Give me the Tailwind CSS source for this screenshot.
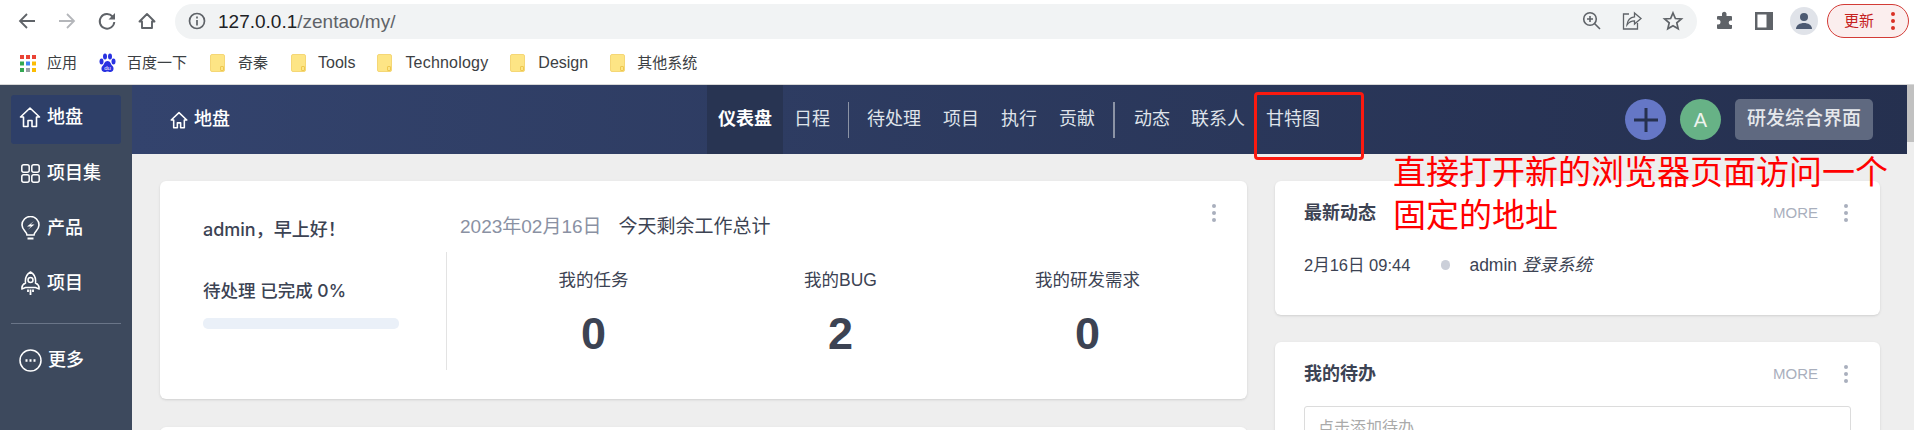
<!DOCTYPE html>
<html lang="zh-CN">
<head>
  <meta charset="UTF-8">
  <title>地盘 - 禅道</title>
  <script src="https://cdn.jsdelivr.net/npm/@tailwindcss/browser@4"></script>
</head>
<body class="relative h-[430px] w-[1914px] overflow-hidden bg-white font-['Liberation_Sans','Noto_Sans_CJK_SC',sans-serif] text-[#3c4353]">
  <!-- Browser toolbar -->
  <div class="flex h-[42px] items-center">
    <div class="flex w-[175px] shrink-0 items-center gap-[20px] pl-[17px] text-[#5f6368]">
      <svg class="h-5 w-5" viewBox="0 0 20 20" fill="none" stroke="currentColor" stroke-width="1.800"><path d="M18 10H3M10 3l-7 7 7 7"/></svg>
      <svg class="h-5 w-5 text-[#b4b6ba]" viewBox="0 0 20 20" fill="none" stroke="currentColor" stroke-width="1.800"><path d="M2 10h15M10 3l7 7-7 7"/></svg>
      <svg class="h-5 w-5" viewBox="0 0 20 20" fill="none" stroke="currentColor" stroke-width="1.900"><path d="M15.500 5.500A7.300 7.300 0 1 0 17.300 11"/><path d="M18 2v6.500h-6.500z" fill="currentColor" stroke="none"/></svg>
      <svg class="h-5 w-5" viewBox="0 0 20 20" fill="none" stroke="currentColor" stroke-width="1.900"><path d="M2.500 10.500 10 3l7.500 7.500h-2.500V17H5v-6.500z" stroke-linejoin="round"/></svg>
    </div>
    <div class="flex h-[35px] w-[1522px] shrink-0 items-center rounded-full bg-[#f1f3f4] pl-[13px] text-[#5f6368]">
      <svg class="h-[18px] w-[18px] shrink-0" viewBox="0 0 18 18" fill="none" stroke="currentColor" stroke-width="1.700"><circle cx="9" cy="9" r="7.500"/><path d="M9 8v5.500M9 4.500v2"/></svg>
      <span class="ml-[12px] text-[19px] leading-none"><span class="text-[#202124]">127.0.0.1</span>/zentao/my/</span>
      <div class="ml-auto flex items-center gap-[19px] pr-[13px]">
        <svg class="h-[20px] w-[20px]" viewBox="0 0 20 20" fill="none" stroke="currentColor" stroke-width="1.600"><circle cx="8" cy="8" r="6.300"/><path d="M12.500 12.500 18 18M8 5v6M5 8h6"/></svg>
        <svg class="h-[22px] w-[22px]" viewBox="0 0 22 22" fill="none" stroke="currentColor" stroke-width="1.300"><path d="M8 4H2.500v15h14v-6"/><path d="M13.500 3l6.500 5.500-6.500 5.500v-3.200c-3.500 0-5.500 1.200-7.500 4 .5-4.500 3-7.500 7.500-8z"/></svg>
        <svg class="h-[22px] w-[22px]" viewBox="0 0 22 22" fill="none" stroke="currentColor" stroke-width="1.700"><path d="m11 3 2.400 5.500 6 .5-4.600 3.900 1.400 5.900L11 15.800l-5.200 3 1.400-5.900L2.600 9l6-.5z"/></svg>
      </div>
    </div>
    <div class="flex flex-1 items-center pl-[18px] text-[#5f6368]">
      <svg class="h-5 w-5" viewBox="0 0 20 20" fill="currentColor"><path d="M7 2.500a2.300 2.300 0 0 1 4.500 0V5H16a1 1 0 0 1 1 1v3.500h-1.500a2.300 2.300 0 0 0 0 4.500H17v3a1 1 0 0 1-1 1H3a1 1 0 0 1-1-1v-3.500h1a2.500 2.500 0 0 0 0-5H2V6a1 1 0 0 1 1-1h4z"/></svg>
      <svg class="ml-[20px] h-[18px] w-[18px]" viewBox="0 0 18 18" fill="none" stroke="currentColor" stroke-width="2.500"><path d="M1.200 1.200h15.600v15.600H1.200z"/><path d="M14 1v16" stroke-width="5"/></svg>
      <div class="ml-[17px] flex h-7 w-7 items-center justify-center rounded-full bg-[#e0e3e9]">
        <svg class="h-[18px] w-[18px] text-[#4c5a72]" viewBox="0 0 18 18" fill="currentColor"><circle cx="9" cy="5" r="4"/><path d="M1 17c0-4 4-6 8-6s8 2 8 6z"/></svg>
      </div>
      <div class="ml-[9px] flex h-[34px] w-[82px] items-center rounded-full border border-[#d33b36] bg-[#fbeeee] pl-[16px] text-[15px] text-[#c5221f]">
        <span>更新</span>
        <span class="ml-[17px] flex flex-col gap-[3px]"><i class="h-1 w-1 rounded-full bg-[#d93025]"></i><i class="h-1 w-1 rounded-full bg-[#d93025]"></i><i class="h-1 w-1 rounded-full bg-[#d93025]"></i></span>
      </div>
    </div>
  </div>

  <!-- Bookmarks bar -->
  <div class="flex h-[43px] items-center border-b border-[#d8d8d8] text-[15px] text-[#3c4043]">
    <svg class="ml-[20px] h-[17px] w-[16px]" viewBox="0 0 16 17"><path fill="#ea4335" d="M0 0h4v4H0zM6 0h4v4H6zM12 0h4v4h-4z"/><path fill="#34a853" d="M0 6.500h4v4H0z"/><path fill="#4285f4" d="M6 6.500h4v4H6z"/><path fill="#fbbc04" d="M12 6.500h4v4h-4z"/><path fill="#34a853" d="M0 13h4v4H0z"/><path fill="#9aa0a6" d="M6 13h4v4H6z"/><path fill="#fbbc04" d="M12 13h4v4h-4z"/></svg>
    <span class="ml-[11px]">应用</span>
    <svg class="ml-[22px] h-[20px] w-[17px]" viewBox="0 0 17 20" fill="#2932e1"><ellipse cx="2.500" cy="8.500" rx="2" ry="3"/><ellipse cx="6" cy="3.500" rx="2" ry="3"/><ellipse cx="11" cy="3.500" rx="2" ry="3"/><ellipse cx="14.500" cy="8.500" rx="2" ry="3"/><path d="M8.500 8c3 0 3 3 5 5s1 6-2 6c-1.500 0-2-.5-3-.5s-1.500.5-3 .5c-3 0-4-4-2-6s2-5 5-5z"/><text x="8.500" y="17" font-size="6" text-anchor="middle" fill="#fff">du</text></svg>
    <span class="ml-[11px]">百度一下</span>
    <span class="relative ml-[23px] h-[18px] w-[15px] rounded-[2px] border border-[#f5d776] bg-[#fde585]"><i class="absolute bottom-0 right-0 h-[5px] w-[4px] rounded-[1px] border border-[#eec84f]"></i></span>
    <span class="ml-[13px]">奇秦</span>
    <span class="relative ml-[23px] h-[18px] w-[15px] rounded-[2px] border border-[#f5d776] bg-[#fde585]"><i class="absolute bottom-0 right-0 h-[5px] w-[4px] rounded-[1px] border border-[#eec84f]"></i></span>
    <span class="ml-[12px] text-[16px]">Tools</span>
    <span class="relative ml-[22px] h-[18px] w-[15px] rounded-[2px] border border-[#f5d776] bg-[#fde585]"><i class="absolute bottom-0 right-0 h-[5px] w-[4px] rounded-[1px] border border-[#eec84f]"></i></span>
    <span class="ml-[13px] text-[16px] tracking-[0.2px]">Technology</span>
    <span class="relative ml-[22px] h-[18px] w-[15px] rounded-[2px] border border-[#f5d776] bg-[#fde585]"><i class="absolute bottom-0 right-0 h-[5px] w-[4px] rounded-[1px] border border-[#eec84f]"></i></span>
    <span class="ml-[13px] text-[16px]">Design</span>
    <span class="relative ml-[22px] h-[18px] w-[15px] rounded-[2px] border border-[#f5d776] bg-[#fde585]"><i class="absolute bottom-0 right-0 h-[5px] w-[4px] rounded-[1px] border border-[#eec84f]"></i></span>
    <span class="ml-[12px]">其他系统</span>
  </div>

  <!-- App -->
  <div class="flex h-[345px] bg-[#eeeeee]">
    <!-- Sidebar -->
    <aside class="flex w-[132px] shrink-0 flex-col bg-[#3d495d] px-[11px] pt-[10px] text-[18px] font-medium text-white">
      <div class="flex h-[49px] items-center gap-[6px] rounded-[3px] bg-[#2e3f68] pb-[5px] pl-[8px]">
        <svg class="h-[22px] w-[22px]" viewBox="0 0 22 22" fill="none" stroke="currentColor" stroke-width="1.600"><path d="M1.500 11 11 2l9.500 9h-3v9.500H13v-6H9v6H4.500V11z" stroke-linejoin="round"/></svg>地盘
      </div>
      <div class="mt-[4px] flex h-[50px] items-center gap-[7px] pl-[10px]">
        <svg class="h-[19px] w-[19px]" viewBox="0 0 19 19" fill="none" stroke="currentColor" stroke-width="1.500"><rect x=".8" y=".8" width="7.400" height="7.400" rx="2"/><rect x="10.800" y=".8" width="7.400" height="7.400" rx="2"/><rect x=".8" y="10.800" width="7.400" height="7.400" rx="2"/><rect x="10.800" y="10.800" width="7.400" height="7.400" rx="2"/></svg>项目集
      </div>
      <div class="mt-[5px] flex h-[50px] items-center gap-[7px] pl-[10px]">
        <svg class="h-[24px] w-[19px]" viewBox="0 0 19 24" fill="none" stroke="currentColor" stroke-width="1.600"><path d="M6 19c0-3-5-5-5-10a8.500 8.500 0 0 1 17 0c0 5-5 7-5 10z"/><path d="M6.500 22.500h6" stroke-width="2"/><path d="M13 5 6 10.500h4L6.500 14l7-5.500h-4z" fill="currentColor" stroke="none"/></svg>产品
      </div>
      <div class="mt-[5px] flex h-[50px] items-center gap-[7px] pl-[10px]">
        <svg class="h-[25px] w-[19px]" viewBox="0 0 19 25" fill="none" stroke="currentColor" stroke-width="1.500"><path d="M9.500 1C14 3.500 15 8 14.500 12c2 1 4 3.500 3.500 6l-3.500-1.500h-10L1 18c-.5-2.500 1.500-5 3.500-6C4 8 5 3.500 9.500 1z"/><circle cx="9.500" cy="9" r="2.500"/><path d="M7 18.500v2.500M9.500 18.500v5.500M12 18.500v2.500" stroke-width="1.800"/></svg>项目
      </div>
      <div class="mt-[15px] h-px bg-[#6a7588]"></div>
      <div class="mt-[11px] flex h-[50px] items-center gap-[6px] pl-[8px]">
        <svg class="h-[23px] w-[23px]" viewBox="0 0 23 23" fill="none" stroke="currentColor" stroke-width="1.500"><circle cx="11.500" cy="11.500" r="10.500"/><path d="M6.500 11.500h2M10.500 11.500h2M14.500 11.500h2" stroke-width="2.400"/></svg>更多
      </div>
    </aside>

    <div class="flex min-w-0 flex-1 flex-col">
      <!-- Header -->
      <header class="flex h-[69px] shrink-0 items-stretch bg-gradient-to-r from-[#33436d] to-[#25304f] text-[18px] text-[#dfe3ea]">
        <div class="flex w-[575px] items-center gap-[6px] pl-[38px] font-medium text-white">
          <svg class="h-[18px] w-[18px]" viewBox="0 0 22 22" fill="none" stroke="currentColor" stroke-width="1.900"><path d="M1.500 11 11 2l9.500 9h-3v9.500H13v-6H9v6H4.500V11z" stroke-linejoin="round"/></svg>地盘
        </div>
        <div class="flex w-[76px] items-center justify-center bg-[#283452] font-bold text-white">仪表盘</div>
        <nav class="flex items-center pl-[11px]">
          <a>日程</a>
          <i class="mx-[18px] h-9 w-px bg-[#8b93a5]"></i>
          <a>待处理</a>
          <a class="ml-[22px]">项目</a>
          <a class="ml-[22px]">执行</a>
          <a class="ml-[22px]">贡献</a>
          <i class="ml-[18px] mr-[19px] h-9 w-[2px] bg-[#8b93a5]"></i>
          <a>动态</a>
          <a class="ml-[21px]">联系人</a>
          <a class="ml-[21px]">甘特图</a>
        </nav>
        <div class="ml-auto flex items-center pr-[41px]">
          <span class="flex h-[41px] w-[41px] items-center justify-center rounded-full bg-[#6577c6]">
            <svg class="h-6 w-6 text-[#26314f]" viewBox="0 0 24 24" fill="none" stroke="currentColor" stroke-width="3"><path d="M12 0v24M0 12h24"/></svg>
          </span>
          <span class="ml-[14px] flex h-[41px] w-[41px] items-center justify-center rounded-full bg-[#67b286] text-[20px] text-[#eef2ee]">A</span>
          <span class="ml-[14px] flex h-[41px] w-[138px] items-center justify-center rounded-[5px] bg-[#5f6980] text-[19px] font-medium text-[#e6e8ec]">研发综合界面</span>
        </div>
      </header>

      <!-- Content -->
      <main class="flex min-h-0 flex-1 gap-x-[28px] overflow-hidden pl-[28px] pt-[27px]">
        <div class="flex w-[1087px] shrink-0 flex-col gap-y-[28px]">
          <section class="relative flex h-[218px] shrink-0 rounded-[6px] bg-white shadow-sm">
            <div class="w-[286px] pl-[43px] pt-[37px] font-['Inter','Noto_Sans_CJK_SC',sans-serif]">
              <p class="text-[18px] font-medium leading-6">admin，早上好！</p>
              <p class="mt-[37px] text-[17.500px] font-medium leading-6">待处理 已完成 0%</p>
              <div class="mt-[15px] h-[11px] w-[196px] rounded-[5px] bg-[#eaf0f8]"></div>
            </div>
            <div class="flex-1 pt-[34px]">
              <p class="pl-[14px] text-[19px] leading-6"><span class="text-[#8a91a3]">2023年02月16日</span><span class="ml-[17px]">今天剩余工作总计</span></p>
              <div class="mt-[13px] grid h-[118px] w-[765px] grid-cols-3 border-l border-[#e3e3e3] pl-[23px] pt-[15px] text-center text-[17.500px]">
                <div>我的任务<p class="mt-[15px] text-[45px] font-bold leading-[52px]">0</p></div>
                <div>我的BUG<p class="mt-[15px] text-[45px] font-bold leading-[52px]">2</p></div>
                <div>我的研发需求<p class="mt-[15px] text-[45px] font-bold leading-[52px]">0</p></div>
              </div>
            </div>
            <span class="absolute right-[31px] top-[23px] flex flex-col gap-[3px]"><i class="h-1 w-1 rounded-full bg-[#a9afbd]"></i><i class="h-1 w-1 rounded-full bg-[#a9afbd]"></i><i class="h-1 w-1 rounded-full bg-[#a9afbd]"></i></span>
          </section>
          <section class="h-[100px] shrink-0 rounded-t-[6px] bg-white shadow-sm"></section>
        </div>

        <div class="flex w-[605px] shrink-0 flex-col gap-y-[27px]">
          <section class="h-[134px] shrink-0 rounded-[6px] bg-white px-[29px] pt-[20px] shadow-sm">
            <div class="flex items-center">
              <h3 class="text-[18px] font-bold leading-6">最新动态</h3>
              <span class="ml-auto text-[15px] text-[#a9afbd]">MORE</span>
              <span class="ml-[26px] mr-[3px] flex flex-col gap-[3px]"><i class="h-1 w-1 rounded-full bg-[#a9afbd]"></i><i class="h-1 w-1 rounded-full bg-[#a9afbd]"></i><i class="h-1 w-1 rounded-full bg-[#a9afbd]"></i></span>
            </div>
            <div class="mt-[28px] flex items-center text-[16.500px] leading-6">
              <span>2月16日 09:44</span>
              <i class="ml-[31px] h-[10px] w-[9px] rounded-full bg-[#cbcfd9]"></i>
              <span class="ml-[19px] text-[17.500px]">admin <em>登录系统</em></span>
            </div>
          </section>
          <section class="h-[200px] shrink-0 rounded-t-[6px] bg-white px-[29px] pt-[20px] shadow-sm">
            <div class="flex items-center">
              <h3 class="text-[18px] font-bold leading-6">我的待办</h3>
              <span class="ml-auto text-[15px] text-[#a9afbd]">MORE</span>
              <span class="ml-[26px] mr-[3px] flex flex-col gap-[3px]"><i class="h-1 w-1 rounded-full bg-[#a9afbd]"></i><i class="h-1 w-1 rounded-full bg-[#a9afbd]"></i><i class="h-1 w-1 rounded-full bg-[#a9afbd]"></i></span>
            </div>
            <div class="mt-[20px] h-[44px] rounded-[3px] border border-[#dcdcdc] pl-[13px] pt-[9px] text-[16px] leading-6 text-[#aaaaaa]">点击添加待办</div>
          </section>
        </div>
      </main>
    </div>
  </div>

  <!-- Scrollbar -->
  <div class="absolute right-0 top-[85px] h-[345px] w-[7px] bg-[#eeeeee]"><div class="h-[57px] bg-[#c1c1c1]"></div></div>

  <!-- Annotation over the screenshot -->
  <div class="absolute left-[1254px] top-[92px] h-[68px] w-[110px] rounded-[4px] border-[3px] border-[#fb1a10]"></div>
  <p class="absolute left-[1393px] top-[151px] w-[500px] text-[33px] leading-[43px] text-[#ff0000]">直接打开新的浏览器页面访问一个固定的地址</p>
</body>
</html>
